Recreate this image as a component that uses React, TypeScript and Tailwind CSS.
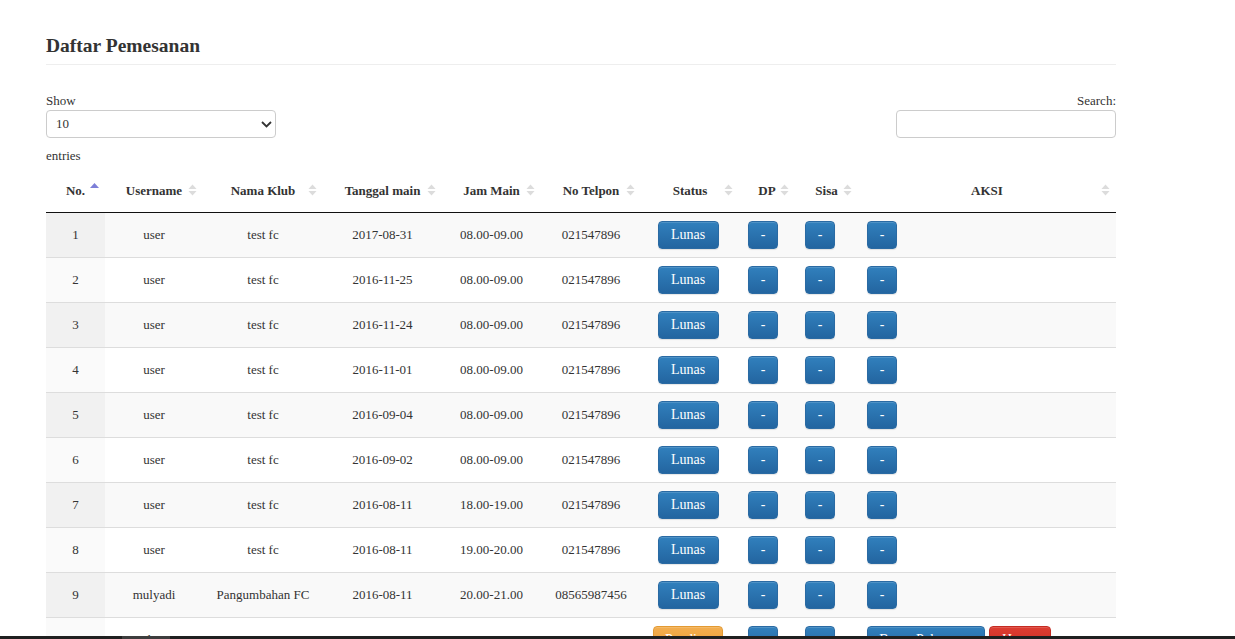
import React from "react";

type Row = {
  no: string;
  user: string;
  klub: string;
  tgl: string;
  jam: string;
  tel: string;
  pending?: boolean;
};

const rows: Row[] = [
  { no: "1", user: "user", klub: "test fc", tgl: "2017-08-31", jam: "08.00-09.00", tel: "021547896" },
  { no: "2", user: "user", klub: "test fc", tgl: "2016-11-25", jam: "08.00-09.00", tel: "021547896" },
  { no: "3", user: "user", klub: "test fc", tgl: "2016-11-24", jam: "08.00-09.00", tel: "021547896" },
  { no: "4", user: "user", klub: "test fc", tgl: "2016-11-01", jam: "08.00-09.00", tel: "021547896" },
  { no: "5", user: "user", klub: "test fc", tgl: "2016-09-04", jam: "08.00-09.00", tel: "021547896" },
  { no: "6", user: "user", klub: "test fc", tgl: "2016-09-02", jam: "08.00-09.00", tel: "021547896" },
  { no: "7", user: "user", klub: "test fc", tgl: "2016-08-11", jam: "18.00-19.00", tel: "021547896" },
  { no: "8", user: "user", klub: "test fc", tgl: "2016-08-11", jam: "19.00-20.00", tel: "021547896" },
  { no: "9", user: "mulyadi", klub: "Pangumbahan FC", tgl: "2016-08-11", jam: "20.00-21.00", tel: "08565987456" },
  { no: "10", user: "adc10", klub: "24", tgl: "2020-02-20", jam: "13.00-14.00", tel: "089765", pending: true },
];

const GRID =
  "grid grid-cols-[59px_98px_120px_119px_99px_100px_98px_56px_63px_258px]";

function SortIcon({ active }: { active?: boolean }) {
  if (active) {
    return (
      <svg width="9" height="13" viewBox="0 0 9 13" className="absolute right-[6px] top-[13px]">
        <polygon points="0,5 4.5,0 9,5" fill="#7d7fd8" />
      </svg>
    );
  }
  return (
    <svg width="9" height="13" viewBox="0 0 9 13" className="absolute right-[6px] top-[14px]">
      <polygon points="0.5,5 4.5,0.5 8.5,5" fill="#dcdcdc" />
      <polygon points="0.5,7 8.5,7 4.5,11.5" fill="#dcdcdc" />
    </svg>
  );
}

function Th({ label, active }: { label: string; active?: boolean }) {
  return (
    <div className="relative flex items-center justify-center h-[42px] pb-[2px] font-bold text-[13px] leading-[15px] text-[#333]">
      <span>{label}</span>
      <SortIcon active={active} />
    </div>
  );
}

function Btn({
  children,
  color = "blue",
  w,
}: {
  children: React.ReactNode;
  color?: "blue" | "orange" | "red";
  w: string;
}) {
  const cls =
    color === "blue"
      ? "bg-linear-to-b from-[#3180bd] to-[#2365a0] border-[#2a6aa3]"
      : color === "orange"
      ? "bg-linear-to-b from-[#f3ae4f] to-[#eb9c2c] border-[#e39a32]"
      : "bg-linear-to-b from-[#dd3d31] to-[#c92a22] border-[#c42b22]";
  return (
    <div
      className={`${cls} ${w} h-[28px] rounded-[4px] border flex items-center justify-center text-white text-[14px] leading-[20px] shadow-[inset_0_1px_0_rgba(255,255,255,0.15),0_1px_1px_rgba(0,0,0,0.1)]`}
    >
      {children}
    </div>
  );
}

const CELL = "flex items-center justify-center pb-[2px]";

export default function App() {
  return (
    <div className="h-screen overflow-hidden bg-white font-['Liberation_Serif',serif] text-[#333]">
      <div className="ml-[46px] w-[1070px] pt-[35px]">
        <h1 className="text-[19.5px] leading-[22px] font-bold pb-[7px] border-b border-[#eee]">
          Daftar Pemesanan
        </h1>

        <div className="mt-[28px] flex justify-between">
          <div className="flex flex-col">
            <span className="text-[13px] leading-[15px]">Show</span>
            <div className="relative mt-[2px] w-[230px] h-[28px]">
              <select className="appearance-none w-full h-full border border-[#ccc] rounded-[4px] pl-[9px] text-[13px] text-[#333] bg-white outline-none font-['Liberation_Serif',serif]">
                <option>10</option>
              </select>
              <svg
                width="11"
                height="7"
                viewBox="0 0 11 7"
                className="absolute right-[4px] top-[11px] pointer-events-none"
              >
                <path d="M1 1 L5.5 5.5 L10 1" fill="none" stroke="#333" strokeWidth="1.8" />
              </svg>
            </div>
            <span className="mt-[10px] text-[13px] leading-[15px]">entries</span>
          </div>
          <div className="flex flex-col items-end">
            <span className="text-[13px] leading-[15px]">Search:</span>
            <input
              className="mt-[2px] w-[220px] h-[28px] border border-[#ccc] rounded-[4px] outline-none"
              type="text"
            />
          </div>
        </div>

        <div className="mt-[7px]">
          <div className={`${GRID} border-b border-[#111]`}>
            <Th label="No." active />
            <Th label="Username" />
            <Th label="Nama Klub" />
            <Th label="Tanggal main" />
            <Th label="Jam Main" />
            <Th label="No Telpon" />
            <Th label="Status" />
            <Th label="DP" />
            <Th label="Sisa" />
            <Th label="AKSI" />
          </div>

          {rows.map((r, i) => {
            const odd = i % 2 === 0;
            return (
              <div
                key={r.no}
                className={`${GRID} h-[44px] box-content ${i > 0 ? "border-t border-[#ddd]" : ""} ${
                  odd ? "bg-[#f9f9f9]" : "bg-white"
                } text-[13px] leading-[15px] text-[#333]`}
              >
                <div className={`${CELL} ${odd ? "bg-[#f1f1f1]" : "bg-[#fafafa]"}`}>{r.no}</div>
                <div className={CELL}>{r.user}</div>
                <div className={CELL}>{r.klub}</div>
                <div className={CELL}>{r.tgl}</div>
                <div className={CELL}>{r.jam}</div>
                <div className={CELL}>{r.tel}</div>
                <div className="flex items-center justify-center pl-[10px] pr-[14px]">
                  {r.pending ? (
                    <Btn color="orange" w="w-[70px]">
                      Pending
                    </Btn>
                  ) : (
                    <Btn w="w-[61px]">Lunas</Btn>
                  )}
                </div>
                <div className="flex items-center pl-[9px]">
                  <Btn w="w-[30px]">-</Btn>
                </div>
                <div className="flex items-center pl-[10px]">
                  <Btn w="w-[30px]">-</Btn>
                </div>
                <div className="flex items-center pl-[9px] gap-[4px]">
                  {r.pending ? (
                    <>
                      <Btn w="w-[118px]">Bayar Pelunasan</Btn>
                      <Btn color="red" w="w-[62px]">
                        Hapus
                      </Btn>
                    </>
                  ) : (
                    <Btn w="w-[30px]">-</Btn>
                  )}
                </div>
              </div>
            );
          })}
        </div>
      </div>

      <div className="fixed bottom-0 left-0 right-0 h-[3px] bg-[#1f1f1f] flex">
        <div className="ml-[122px] w-[48px] h-full bg-[#3d3d3d]" />
      </div>
    </div>
  );
}
